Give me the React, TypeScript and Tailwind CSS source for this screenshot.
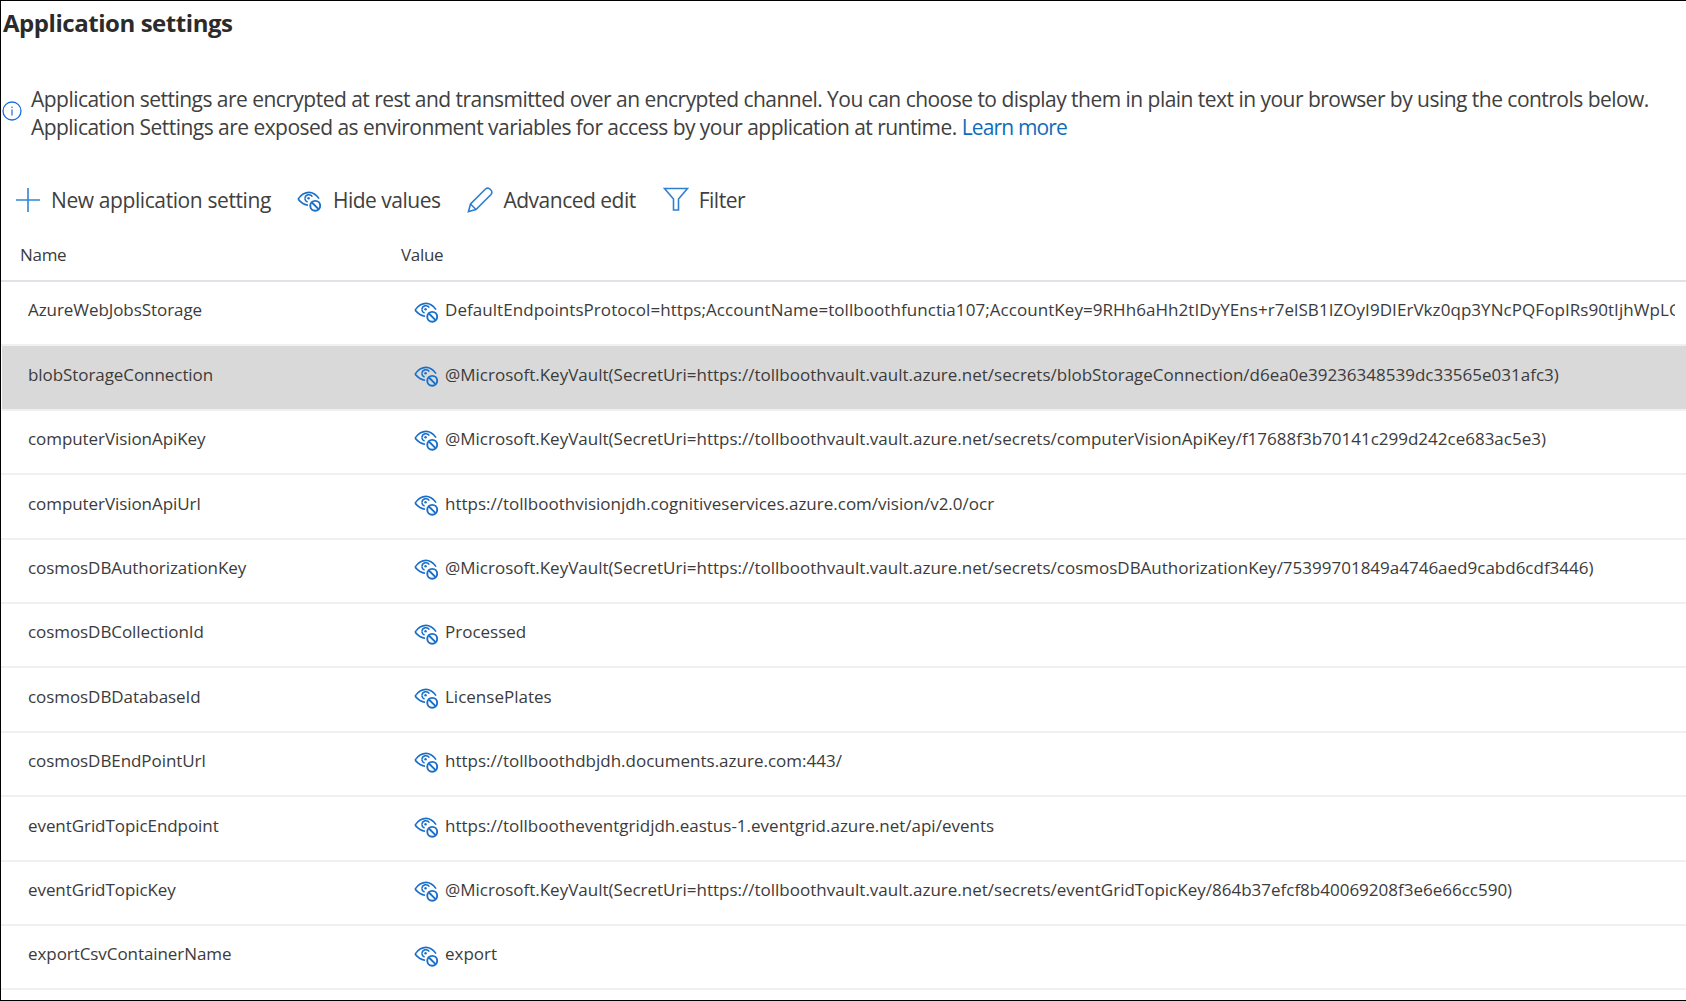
import React from "react";

const Blue = "#1a6fc9";

function EyeOff({ className }: { className: string }) {
  return (
    <svg viewBox="0 0 26 22" className={className} fill="none" stroke={Blue}>
      <path d="M1 8.5 C4.5 3.5 8.5 1.5 12.5 1.5 C16.5 1.5 20 3.8 23 8 " strokeWidth="1.7" />
      <path d="M1 8.5 C4 12 7.5 14.5 11.5 15" strokeWidth="1.7" />
      <path d="M8.2 7.5 A4.2 4.2 0 0 1 16 6" strokeWidth="1.5" />
      <path d="M8.2 7.5 A4.2 4.2 0 0 0 11 11.5" strokeWidth="1.5" />
      <circle cx="12" cy="7.5" r="1.3" fill={Blue} stroke="none" />
      <circle cx="19" cy="15.5" r="5.2" strokeWidth="2" />
      <path d="M15.5 12 L22.5 19" strokeWidth="2" />
    </svg>
  );
}

const rows: [string, string][] = [
  ["AzureWebJobsStorage", "DefaultEndpointsProtocol=https;AccountName=tollboothfunctia107;AccountKey=9RHh6aHh2tIDyYEns+r7elSB1IZOyI9DIErVkz0qp3YNcPQFopIRs90tIjhWpLG"],
  ["blobStorageConnection", "@Microsoft.KeyVault(SecretUri=https://tollboothvault.vault.azure.net/secrets/blobStorageConnection/d6ea0e39236348539dc33565e031afc3)"],
  ["computerVisionApiKey", "@Microsoft.KeyVault(SecretUri=https://tollboothvault.vault.azure.net/secrets/computerVisionApiKey/f17688f3b70141c299d242ce683ac5e3)"],
  ["computerVisionApiUrl", "https://tollboothvisionjdh.cognitiveservices.azure.com/vision/v2.0/ocr"],
  ["cosmosDBAuthorizationKey", "@Microsoft.KeyVault(SecretUri=https://tollboothvault.vault.azure.net/secrets/cosmosDBAuthorizationKey/75399701849a4746aed9cabd6cdf3446)"],
  ["cosmosDBCollectionId", "Processed"],
  ["cosmosDBDatabaseId", "LicensePlates"],
  ["cosmosDBEndPointUrl", "https://tollboothdbjdh.documents.azure.com:443/"],
  ["eventGridTopicEndpoint", "https://tollbootheventgridjdh.eastus-1.eventgrid.azure.net/api/events"],
  ["eventGridTopicKey", "@Microsoft.KeyVault(SecretUri=https://tollboothvault.vault.azure.net/secrets/eventGridTopicKey/864b37efcf8b40069208f3e6e66cc590)"],
  ["exportCsvContainerName", "export"],
];

function Row({ name, value, selected, first }: { name: string; value: string; selected: boolean; first: boolean }) {
  return (
    <div className={`flex h-[64.4px] items-center border-b-2 border-[#f0f0f0] shrink-0 ${selected ? "bg-[#d9d9d9] ml-[1px]" : ""}`}>
      <div className={`${selected ? "w-[412px] pl-[26px]" : "w-[413px] pl-[27px]"} shrink-0 pb-[6px] text-[17px] tracking-[-0.07px] text-[#3b3b3b]`}>{name}</div>
      <EyeOff className="w-[25px] h-[21px] shrink-0 mb-[2px]" />
      <div className={`ml-[6px] w-[1230px] overflow-hidden whitespace-nowrap pb-[6px] text-[17px] text-[#3b3b3b] ${first ? "tracking-[0.06px]" : ""}`}>{value}</div>
    </div>
  );
}

export default function App() {
  return (
    <div className="w-[1686px] h-[1001px] overflow-hidden border-y border-l border-black bg-white font-['Open_Sans','Liberation_Sans',sans-serif] flex flex-col">
      <h1 className="pl-[2px] pt-[5px] h-[48px] text-[24px] font-bold tracking-[-0.45px] leading-[34px] text-[#2b2b2b]">Application settings</h1>
      <div className="flex items-center mt-[36px] h-[56px] pl-[1px]">
        <svg viewBox="0 0 20 20" className="w-[20px] h-[20px] shrink-0 mb-[4px]" fill="none">
          <circle cx="10" cy="10" r="9" stroke="#1a6fe0" strokeWidth="1.3" />
          <rect x="9.4" y="8.5" width="1.2" height="6" fill="#1a6fc9" />
          <rect x="9.4" y="5.6" width="1.2" height="1.4" fill="#1a6fc9" />
        </svg>
        <p className="ml-[9px] text-[21px] leading-[28px] tracking-[-0.528px] whitespace-nowrap text-[#404040]">
          Application settings are encrypted at rest and transmitted over an encrypted channel. You can choose to display them in plain text in your browser by using the controls below.
          <br />
          <span className="tracking-[-0.54px]">Application Settings are exposed as environment variables for access by your application at runtime. </span>
          <span className="tracking-[-0.85px] text-[#0f6cbd]">Learn more</span>
        </p>
      </div>
      <div className="flex items-center mt-[34px] h-[52px] pl-[14px] text-[21px] tracking-[-0.5px] text-[#404040]">
        <svg viewBox="0 0 26 26" className="w-[26px] h-[26px] shrink-0 mb-[3px]" stroke="#2f86d8" strokeWidth="1.6"><path d="M13 1V25M1 13H25" /></svg>
        <span className="ml-[10px] tracking-[-0.4px]">New application setting</span>
        <EyeOff className="w-[25px] h-[21px] ml-[26px] shrink-0" />
        <span className="ml-[11px]">Hide values</span>
        <svg viewBox="0 0 26 26" className="w-[26px] h-[26px] ml-[27px] shrink-0 mb-[2px]" fill="none" stroke="#2f7fd0" strokeWidth="1.6">
          <path d="M1.5 24.5 L3.5 17 L18.5 2 C20 0.8 22 1 23.5 2.5 C25 4 25.2 6 24 7.5 L9 22.5 Z" />
          <path d="M3.5 17 L9 22.5" />
        </svg>
        <span className="ml-[10px]">Advanced edit</span>
        <svg viewBox="0 0 26 26" className="w-[26px] h-[26px] ml-[27px] shrink-0 mb-[4px]" fill="none" stroke="#2f7fd0" strokeWidth="1.6">
          <path d="M1.5 2.5 H24.5 L15.5 13 V24 H10.5 V13 Z" />
        </svg>
        <span className="ml-[10px]">Filter</span>
      </div>
      <div className="flex items-center h-[55px] pt-[2px] text-[17px] tracking-[-0.3px] text-[#3b3b3b] border-b-2 border-[#dfe3e8] shrink-0">
        <span className="w-[400px] pl-[19px]">Name</span>
        <span>Value</span>
      </div>
      {rows.map(([n, v], i) => (
        <Row key={n} name={n} value={v} selected={i === 1} first={i === 0} />
      ))}
    </div>
  );
}
